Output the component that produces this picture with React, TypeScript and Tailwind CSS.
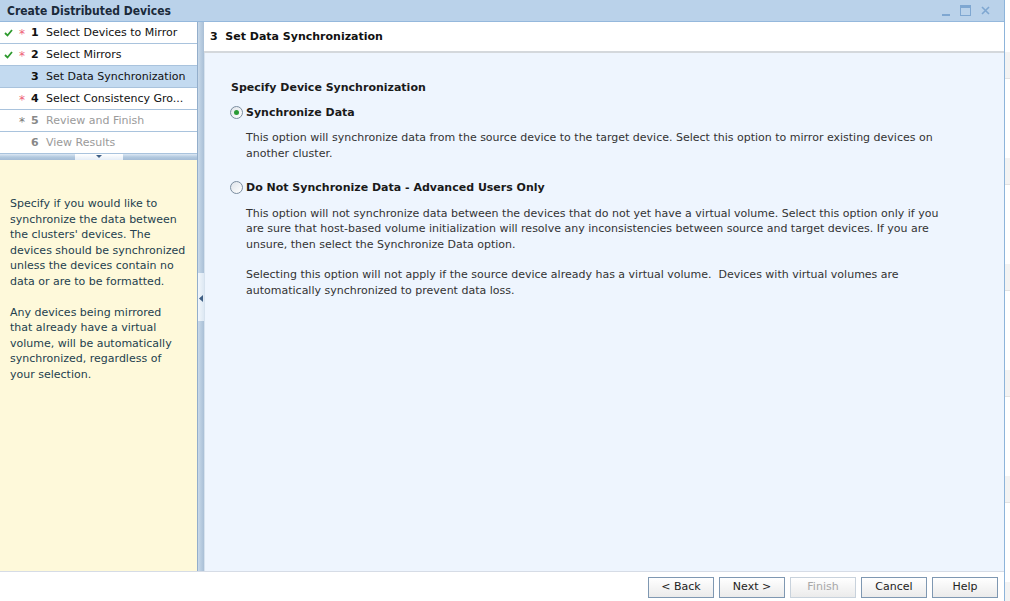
import React from "react";

const FONT = { fontFamily: '"DejaVu Sans", Verdana, sans-serif' };
const COND = { fontFamily: '"DejaVu Sans Condensed", "DejaVu Sans", sans-serif' };

function Check() {
  return (
    <svg width="9" height="8" viewBox="0 0 9 8" className="block">
      <path d="M1 4 L3.5 6.5 L8 1" stroke="#2e9a2e" strokeWidth="1.8" fill="none" />
    </svg>
  );
}

function Star({ grey }: { grey?: boolean }) {
  return (
    <span className={`text-[12px] leading-none ${grey ? "text-[#777]" : "text-[#ee5f78]"}`}>
      *
    </span>
  );
}

type Step = { n: number; label: string; check?: boolean; star?: "red" | "grey"; selected?: boolean; disabled?: boolean };

const steps: Step[] = [
  { n: 1, label: "Select Devices to Mirror", check: true, star: "red" },
  { n: 2, label: "Select Mirrors", check: true, star: "red" },
  { n: 3, label: "Set Data Synchronization", selected: true },
  { n: 4, label: "Select Consistency Gro...", star: "red" },
  { n: 5, label: "Review and Finish", star: "grey", disabled: true },
  { n: 6, label: "View Results", disabled: true },
];

function Btn({ children, disabled }: { children: React.ReactNode; disabled?: boolean }) {
  return (
    <div
      className={`w-[66px] h-[21px] flex items-center justify-center text-[11px] border bg-gradient-to-b from-white to-[#ebebeb] ${
        disabled ? "border-[#c8d2dc] text-[#a8a8a8]" : "border-[#7f98b2] text-[#222]"
      }`}
    >
      {children}
    </div>
  );
}

export default function App() {
  return (
    <div className="w-[1010px] h-[601px] flex bg-white overflow-hidden" style={FONT}>
      <div className="w-[1005px] h-full flex flex-col border-r border-[#8db4da]">
        {/* Title bar */}
        <div className="h-[22px] bg-[#bad2ea] border-b border-[#95b8dc] flex items-center pl-[7px] pr-[14px] shrink-0">
          <span className="text-[12px] font-bold text-[#1a2a3a] flex-1" style={COND}>
            Create Distributed Devices
          </span>
          <div className="flex items-center gap-[10px]">
            <div className="w-[8px] h-[2px] bg-[#7fa7d1] mt-[8px]" />
            <div className="w-[11px] h-[11px] border border-[#7fa7d1] border-t-[3px]" />
            <svg width="9" height="9" viewBox="0 0 9 9">
              <path d="M1 1 L8 8 M8 1 L1 8" stroke="#7fa7d1" strokeWidth="1.6" />
            </svg>
          </div>
        </div>

        {/* Body */}
        <div className="flex-1 flex min-h-0">
          {/* Left column */}
          <div className="w-[197px] flex flex-col shrink-0">
            {steps.map((s) => (
              <div
                key={s.n}
                className={`h-[22px] flex items-center border-b border-[#a9c3dd] text-[11px] pt-[2px] ${
                  s.selected ? "bg-[#c3daf0]" : "bg-white"
                }`}
              >
                <div className="w-[17px] flex justify-center mt-[-2px]">{s.check ? <Check /> : null}</div>
                <div className="w-[10px] flex justify-center">
                  {s.star ? <Star grey={s.star === "grey"} /> : null}
                </div>
                <span className={`w-[19px] pl-[4px] font-bold ${s.disabled ? "text-[#888]" : "text-[#111]"}`}>{s.n}</span>
                <span className={s.disabled ? "text-[#9a9a9a]" : "text-[#111]"}>{s.label}</span>
              </div>
            ))}
            {/* horizontal splitter */}
            <div className="h-[6px] bg-gradient-to-b from-[#dce8f4] via-[#b3c9df] to-[#a4bcd6] flex justify-center">
              <div className="w-[48px] h-full bg-gradient-to-b from-white to-[#e6eef7] flex justify-center ml-[1px]">
                <svg width="6" height="4" viewBox="0 0 6 4" className="mt-[1px]">
                  <path d="M0 0 L6 0 L3 3 Z" fill="#3f5f85" />
                </svg>
              </div>
            </div>
            {/* help */}
            <div className="flex-1 bg-[#fef9da] px-[10px] pt-[36px] text-[11px] leading-[15.5px] text-[#243f4e]">
              <p>
                Specify if you would like to synchronize the data between the clusters' devices. The devices should be
                synchronized unless the devices contain no data or are to be formatted.
              </p>
              <p className="mt-[15.5px]">
                Any devices being mirrored that already have a virtual volume, will be automatically synchronized,
                regardless of your selection.
              </p>
            </div>
          </div>

          {/* vertical splitter */}
          <div className="w-[7px] shrink-0 flex flex-col border-l border-[#93aecb] bg-gradient-to-r from-[#c9d9e9] via-[#b8cce0] to-[#a9bfd6]">
            <div className="h-[251px]" />
            <div className="h-[48px] bg-gradient-to-r from-[#f2f7fc] to-[#dde8f3] flex flex-col justify-center">
              <svg width="4" height="7" viewBox="0 0 4 7" className="ml-[1px] mt-[2px]">
                <path d="M4 0 L4 7 L0 3.5 Z" fill="#3f5f85" />
              </svg>
            </div>
          </div>

          {/* Right */}
          <div className="flex-1 flex flex-col min-w-0">
            <div className="h-[31px] bg-white border-b-2 border-[#d4d8dc] flex items-center pl-[6px] pt-[2px] shrink-0">
              <span className="text-[11px] font-bold text-[#111]">3&nbsp;&nbsp;Set Data Synchronization</span>
            </div>
            <div className="flex-1 bg-[#eef5fe] border-l border-[#d6e2ee] pl-[26px] pt-[27px] text-[11px] leading-[15.5px] text-[#333]">
              <div className="font-bold text-[#1a1a1a]">Specify Device Synchronization</div>
              <div className="mt-[9px] flex items-center ml-[-1px]">
                <div className="w-[13px] h-[13px] rounded-full border border-[#7b8d9f] bg-gradient-to-br from-[#dfe4ea] to-white flex items-center justify-center">
                  <div className="w-[5px] h-[5px] rounded-full bg-[#2a9a35]" />
                </div>
                <span className="ml-[3px] font-bold text-[#1a1a1a]">Synchronize Data</span>
              </div>
              <p className="ml-[15px] mt-[10px] w-[705px]">
                This option will synchronize data from the source device to the target device. Select this option to mirror
                existing devices on another cluster.
              </p>
              <div className="mt-[19px] flex items-center ml-[-1px]">
                <div className="w-[13px] h-[13px] rounded-full border border-[#7b8d9f] bg-gradient-to-br from-[#dfe4ea] to-white" />
                <span className="ml-[3px] font-bold text-[#1a1a1a]">Do Not Synchronize Data - Advanced Users Only</span>
              </div>
              <p className="ml-[15px] mt-[10px] w-[705px]">
                This option will not synchronize data between the devices that do not yet have a virtual volume. Select this
                option only if you are sure that host-based volume initialization will resolve any inconsistencies between
                source and target devices. If you are unsure, then select the Synchronize Data option.
              </p>
              <p className="ml-[15px] mt-[15px] w-[705px]">
                Selecting this option will not apply if the source device already has a virtual volume.&nbsp; Devices with
                virtual volumes are automatically synchronized to prevent data loss.
              </p>
            </div>
          </div>
        </div>

        {/* Footer */}
        <div className="h-[30px] shrink-0 border-t border-[#d6dce6] bg-white flex items-start pt-[5px] justify-end gap-[5px] pr-[6px]">
          <Btn>&lt; Back</Btn>
          <Btn>Next &gt;</Btn>
          <Btn disabled>Finish</Btn>
          <Btn>Cancel</Btn>
          <Btn>Help</Btn>
        </div>
      </div>
      <div
        className="w-[5px] h-full"
        style={{
          backgroundImage:
            "repeating-linear-gradient(to bottom, #ffffff 0px, #ffffff 52px, #f3f3f3 52px, #f3f3f3 78px, #e2e2e2 78px, #e2e2e2 79px, #ffffff 79px, #ffffff 106px)",
        }}
      />
    </div>
  );
}
